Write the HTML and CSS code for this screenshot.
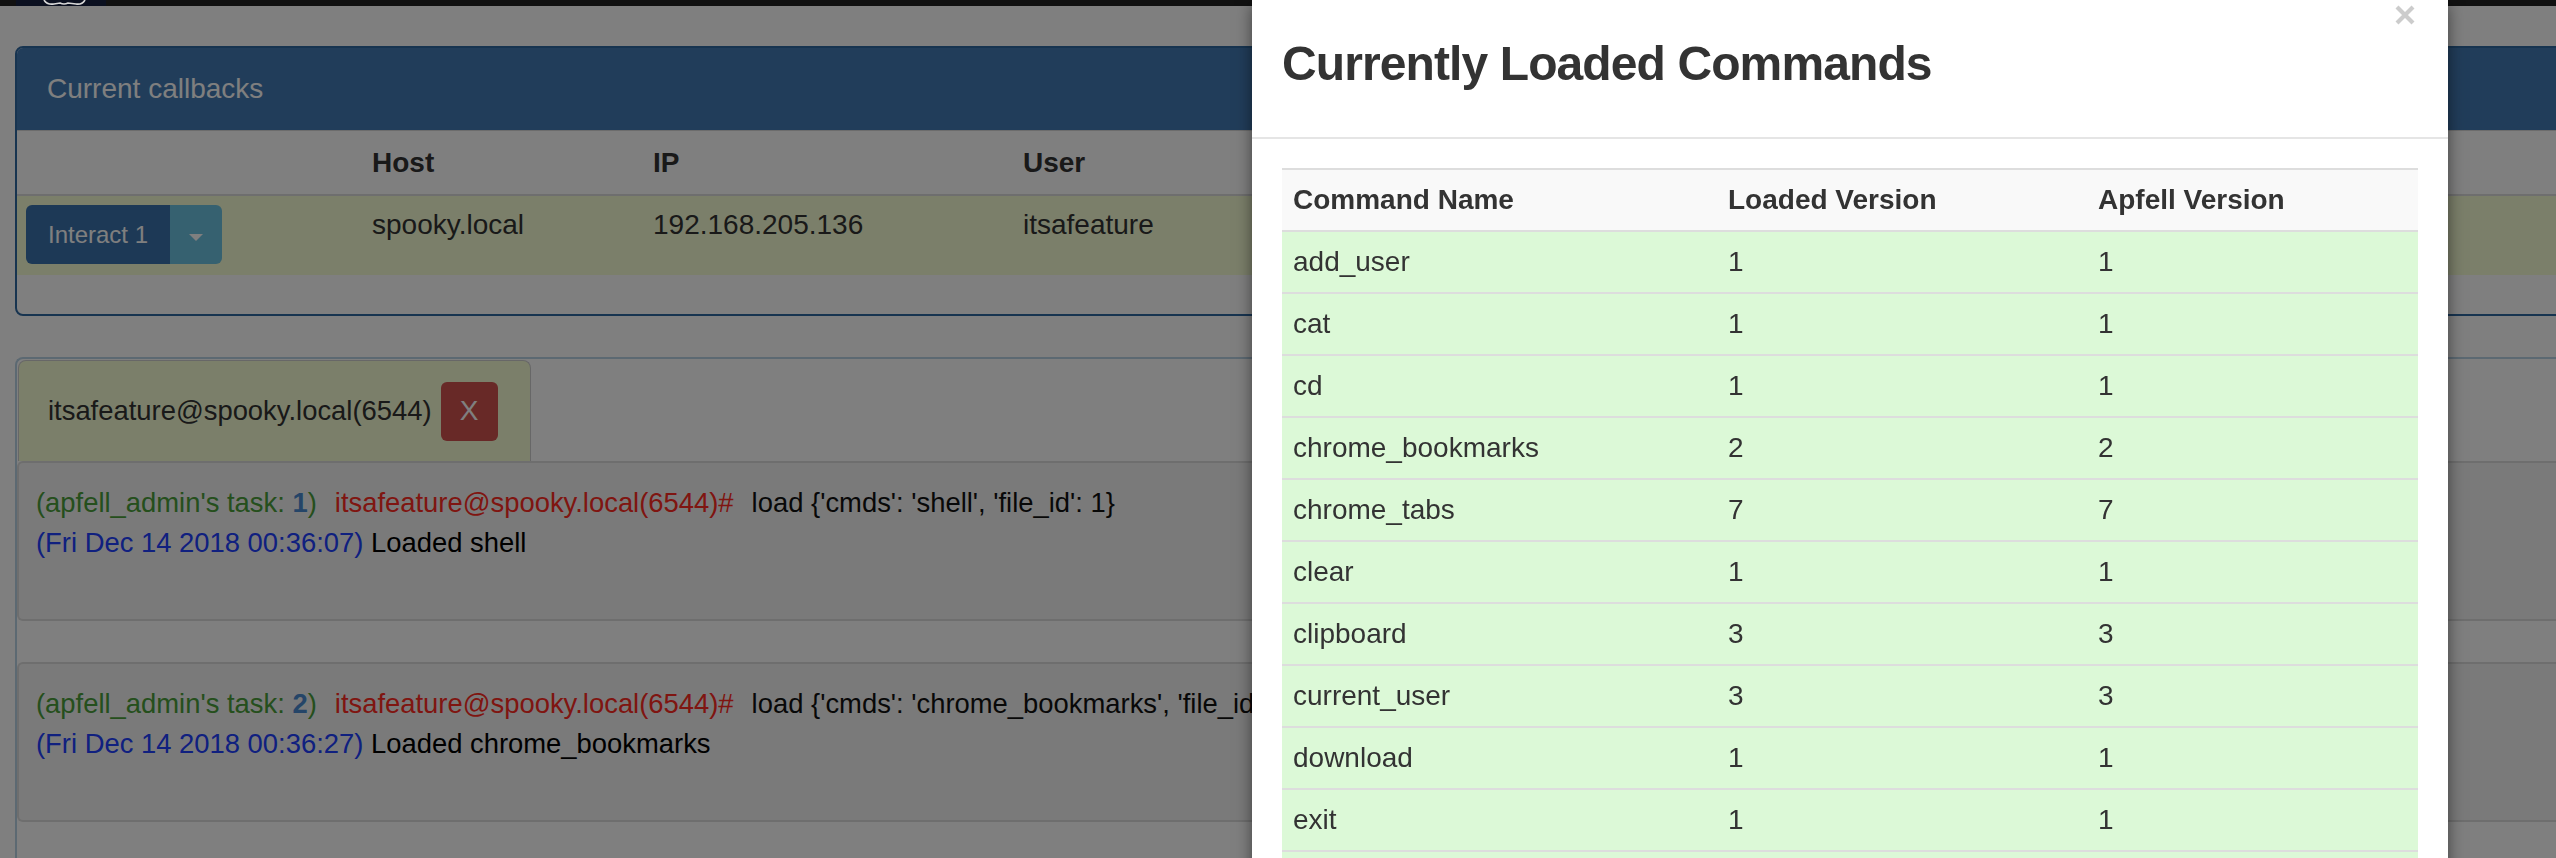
FILE: index.html
```html
<!DOCTYPE html>
<html lang="en">
<head>
<meta charset="utf-8">
<title>Apfell - Callbacks</title>
<link rel="stylesheet" href="styles.css">
</head>
<body>
<nav class="navbar">
  <div class="brand">
    <svg width="90" height="6" viewBox="0 0 90 6" aria-hidden="true">
      <rect width="90" height="6" fill="#0b1020"/>
      <path d="M28 0 Q31 5 38 4 L44 3 Q48 5 52 3 L60 4 Q66 5 69 0" fill="none" stroke="#d8d8d8" stroke-width="1.6"/>
    </svg>
  </div>
</nav>

<main class="page">
  <section class="panel">
    <div class="panel-heading">Current callbacks</div>
    <table class="cb-table">
      <colgroup>
        <col class="c-btn"><col class="c-host"><col class="c-ip"><col>
      </colgroup>
      <thead>
        <tr><th></th><th>Host</th><th>IP</th><th>User</th></tr>
      </thead>
      <tbody>
        <tr>
          <td class="cell-btn">
            <div class="btn-group">
              <button class="btn-interact">Interact 1</button>
              <button class="btn-caret"><span class="caret"></span></button>
            </div>
          </td>
          <td>spooky.local</td>
          <td>192.168.205.136</td>
          <td>itsafeature</td>
        </tr>
      </tbody>
    </table>
  </section>

  <section class="session">
    <div class="tabs">
      <div class="tab">
        <span class="tab-label">itsafeature@spooky.local(6544)</span>
        <button class="x-btn">X</button>
      </div>
    </div>
    <div class="task">
      <div class="line"><span class="op">(apfell_admin's task: <b class="num">1</b>)</span><span class="who">itsafeature@spooky.local(6544)#</span><span class="cmd">load {'cmds': 'shell', 'file_id': 1}</span></div>
      <div class="line"><span class="ts">(Fri Dec 14 2018 00:36:07)</span> <span class="out">Loaded shell</span></div>
    </div>
    <div class="task">
      <div class="line"><span class="op">(apfell_admin's task: <b class="num">2</b>)</span><span class="who">itsafeature@spooky.local(6544)#</span><span class="cmd">load {'cmds': 'chrome_bookmarks', 'file_id': 2}</span></div>
      <div class="line"><span class="ts">(Fri Dec 14 2018 00:36:27)</span> <span class="out">Loaded chrome_bookmarks</span></div>
    </div>
  </section>
</main>

<div class="backdrop"></div>

<div class="modal">
  <div class="modal-header">
    <h3 class="modal-title">Currently Loaded Commands</h3>
    <button class="close" aria-label="Close">
      <svg width="20" height="20" viewBox="0 0 20 20" aria-hidden="true">
        <path d="M2 2 L18 18 M18 2 L2 18" stroke="#cccccc" stroke-width="4.2" fill="none"/>
      </svg>
    </button>
  </div>
  <div class="modal-body">
    <table class="cmd-table">
      <colgroup><col class="m1"><col class="m2"><col></colgroup>
      <thead>
        <tr><th>Command Name</th><th>Loaded Version</th><th>Apfell Version</th></tr>
      </thead>
      <tbody>
        <tr><td>add_user</td><td>1</td><td>1</td></tr>
        <tr><td>cat</td><td>1</td><td>1</td></tr>
        <tr><td>cd</td><td>1</td><td>1</td></tr>
        <tr><td>chrome_bookmarks</td><td>2</td><td>2</td></tr>
        <tr><td>chrome_tabs</td><td>7</td><td>7</td></tr>
        <tr><td>clear</td><td>1</td><td>1</td></tr>
        <tr><td>clipboard</td><td>3</td><td>3</td></tr>
        <tr><td>current_user</td><td>3</td><td>3</td></tr>
        <tr><td>download</td><td>1</td><td>1</td></tr>
        <tr><td>exit</td><td>1</td><td>1</td></tr>
        <tr class="row-tail"><td></td><td></td><td></td></tr>
      </tbody>
    </table>
  </div>
</div>
</body>
</html>
```
FILE: styles.css
```css
* { box-sizing: border-box; }

html, body { margin: 0; padding: 0; }

body {
  width: 2556px;
  height: 858px;
  overflow: hidden;
  background: #fff;
  color: #333;
  font-family: "Liberation Sans", Arial, "Helvetica Neue", sans-serif;
  font-size: 28px;
  line-height: 40px;
}

/* top navbar sliver */
.navbar {
  position: relative;
  z-index: 1045;
  height: 6px;
  background: #111;
  padding-left: 16px;
}
.brand { width: 90px; height: 6px; }
.brand svg { display: block; }

.page { padding-left: 15px; }

/* callbacks panel */
.panel {
  margin-top: 40px;
  margin-right: -40px;
  border: 2px solid #2f68a0;
  border-radius: 8px;
  overflow: hidden;
  background: #fff;
}
.panel-heading {
  height: 82px;
  line-height: 82px;
  padding: 0 30px;
  background: #427ab4;
  color: #fff;
  font-size: 28px;
}

.cb-table {
  width: 100%;
  border-collapse: collapse;
  table-layout: fixed;
  margin-bottom: 39px;
}
.cb-table .c-btn { width: 343px; }
.cb-table .c-host { width: 281px; }
.cb-table .c-ip { width: 370px; }
.cb-table th {
  text-align: left;
  font-weight: bold;
  padding: 12px 12px 11px;
  border-top: 1px solid #d8d8d8;
  border-bottom: 2px solid #ddd;
}
.cb-table td {
  padding: 9px 12px 11px;
  vertical-align: top;
  background: #f6fed4;
  white-space: nowrap;
}
.cb-table td.cell-btn { padding-left: 9px; }

.btn-group { display: inline-flex; vertical-align: top; }
.btn-interact {
  width: 144px;
  height: 59px;
  padding: 0;
  border: none;
  border-radius: 6px 0 0 6px;
  background: #3a72ad;
  color: #fff;
  font-family: inherit;
  font-size: 24px;
}
.btn-caret {
  width: 52px;
  height: 59px;
  padding: 0;
  border: none;
  border-radius: 0 6px 6px 0;
  background: #6cc2e0;
  display: flex;
  align-items: center;
  justify-content: center;
}
.caret {
  width: 0;
  height: 0;
  margin-top: 5px;
  border-left: 7px solid transparent;
  border-right: 7px solid transparent;
  border-top: 7px solid #fff;
}

/* interaction session */
.session {
  margin-top: 41px;
  margin-right: -40px;
  border-top: 2px solid #b8d2e4;
  border-left: 2px solid #b8d2e4;
  border-radius: 8px 0 0 0;
  padding-top: 1px;
  padding-bottom: 40px;
}
.tabs { display: flex; padding-left: 1px; }
.tab {
  display: flex;
  align-items: center;
  gap: 9px;
  height: 101px;
  padding: 0 32px 0 29px;
  background: #f6fed4;
  border: 1px solid #cfcfcf;
  border-bottom: none;
  border-radius: 8px 8px 0 0;
  color: #333;
  font-size: 27.4px;
}
.x-btn {
  width: 57px;
  height: 59px;
  padding: 0;
  border: none;
  border-radius: 6px;
  background: #d0524e;
  color: #fff;
  font-family: inherit;
  font-size: 28px;
}

.task {
  border: 2px solid #dcdcdc;
  border-right: none;
  border-radius: 6px 0 0 6px;
  background: #f5f5f5;
  padding: 20px 17px 56px;
  white-space: nowrap;
  font-size: 27.4px;
}
.task + .task { margin-top: 41px; }
.line { height: 40px; }
.op { color: #4a9e3a; }
.num { color: #4a8ad0; }
.who { color: #ff2b22; margin-left: 18px; }
.cmd { color: #111; margin-left: 18px; }
.ts { color: #2040ff; }
.out { color: #000; }

/* modal */
.backdrop {
  position: fixed;
  inset: 0;
  background: rgba(0, 0, 0, 0.5);
  z-index: 1040;
}
.modal {
  position: fixed;
  top: 0;
  left: 1252px;
  width: 1196px;
  height: 960px;
  background: #fff;
  z-index: 1050;
  box-shadow: 0 5px 15px rgba(0, 0, 0, 0.5);
}
.modal-header {
  display: flex;
  justify-content: space-between;
  align-items: flex-start;
  padding: 0 33px 0 30px;
  border-bottom: 2px solid #e5e5e5;
}
.modal-title {
  margin: 37px 0 47px;
  font-size: 48px;
  line-height: 53px;
  font-weight: bold;
  letter-spacing: -0.9px;
  color: #333;
}
.close {
  margin-top: 5px;
  padding: 0;
  border: none;
  background: none;
  width: 20px;
  height: 20px;
}
.close svg { display: block; }
.modal-body { padding: 29px 30px; }

.cmd-table {
  width: 100%;
  border-collapse: collapse;
  table-layout: fixed;
  border-top: 2px solid #ddd;
}
.cmd-table .m1 { width: 435px; }
.cmd-table .m2 { width: 370px; }
.cmd-table th {
  text-align: left;
  font-weight: bold;
  background: #f9f9f9;
  padding: 10px 11px;
  border-bottom: 2px solid #ddd;
}
.cmd-table td {
  height: 60px;
  background: #dcf9d7;
  padding: 10px 11px;
  border-top: 2px solid #ddd;
}
```
